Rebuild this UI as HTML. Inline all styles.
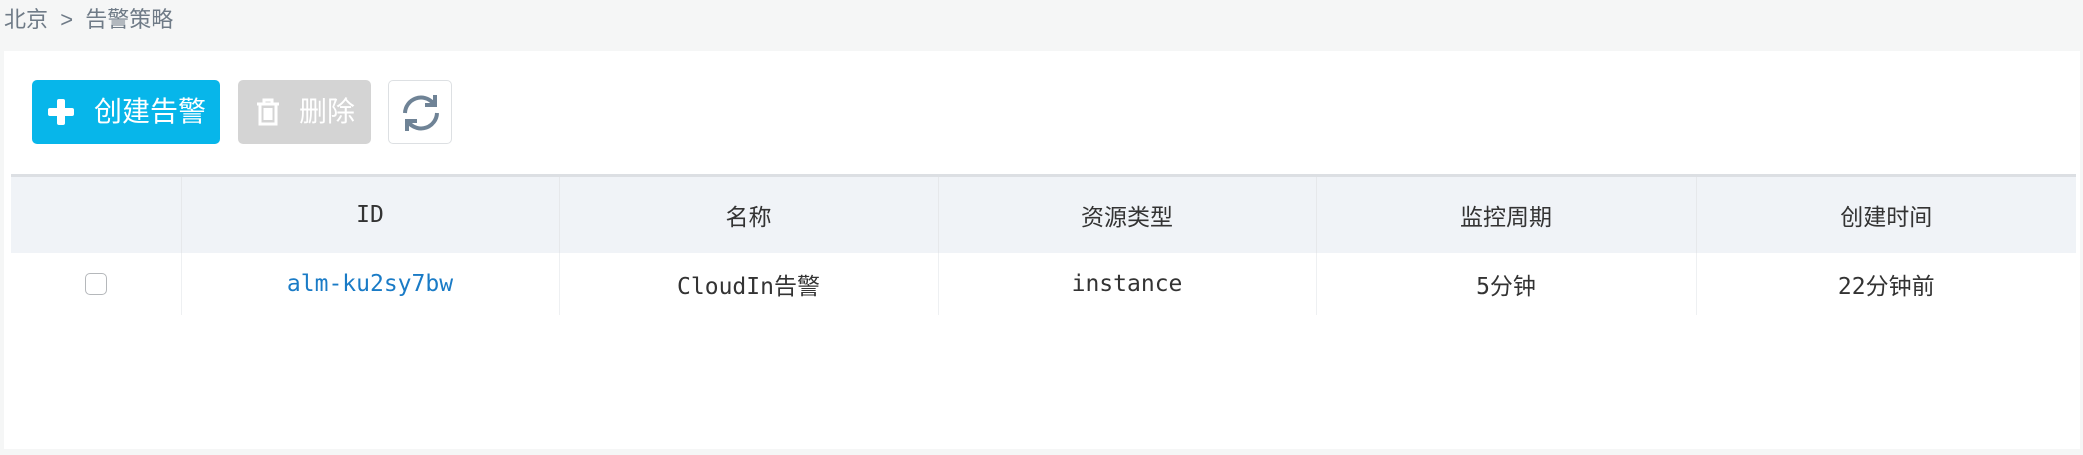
<!DOCTYPE html>
<html><head><meta charset="utf-8"><style>
*{margin:0;padding:0;box-sizing:border-box}
body{width:2083px;height:455px;background:#f5f6f6;position:relative;overflow:hidden;font-family:"Liberation Sans","Noto Sans CJK SC",sans-serif}
.bc{position:absolute;left:4px;top:5px;font-size:22px;color:#6f7b87;line-height:30px;white-space:pre}
.card{position:absolute;left:4px;top:51px;width:2076px;height:398px;background:#fff}
.btn{position:absolute;top:80px;height:64px;border-radius:5px;color:#fff;font-size:28px;line-height:64px}
.t{position:absolute;left:11px;top:174px;width:2065px;border-collapse:collapse;font-family:"DejaVu Sans Mono","Liberation Mono","Noto Sans CJK SC",monospace;font-size:23px;color:#333}
.t th{background:#f0f3f7;height:77px;font-weight:normal;border-top:3px solid #dcdfe3;border-left:1px solid #e6e8eb}
.t td{height:62px;text-align:center;border-left:1px solid #eef0f2}
.t th:first-child,.t td:first-child{border-left:none}
</style></head><body>
<div class="bc">北京  &gt;  告警策略</div>
<div class="card"></div>
<div class="btn" style="left:32px;width:188px;background:#07b6ea">
<svg style="position:absolute;left:16px;top:19px" width="26" height="26"><rect x="9" y="0" width="8" height="26" rx="2" fill="#fff"/><rect x="0" y="9" width="26" height="8" rx="2" fill="#fff"/></svg>
<span style="position:absolute;left:62px">创建告警</span></div>
<div class="btn" style="left:238px;width:133px;background:#d4d4d4">
<svg style="position:absolute;left:17px;top:18px" width="26" height="28" fill="none" stroke="#fff" stroke-width="3"><path d="M2 6H24M9 6V2H17V6M5 6V26H21V6M10 10V22M13 10V22M16 10V22"/></svg>
<span style="position:absolute;left:61px">删除</span></div>
<div class="btn" style="left:388px;width:64px;border:1px solid #dde0e3;background:#fff">
<svg style="position:absolute;left:11px;top:11px" width="42" height="42" viewBox="0 0 42 42" fill="none" stroke="#6f8396" stroke-width="4"><path d="M5 21A16 16 0 0 1 33 11"/><path d="M37 21A16 16 0 0 1 9 31"/><path d="M35 3V13H25"/><path d="M7 39V29H17"/></svg></div>
<table class="t">
<tr><th style="width:170px"></th><th style="width:378px">ID</th><th style="width:379px">名称</th><th style="width:378px">资源类型</th><th style="width:380px">监控周期</th><th>创建时间</th></tr>
<tr><td><span style="display:inline-block;width:22px;height:22px;border:1.5px solid #b5b8bb;border-radius:5px;vertical-align:middle"></span></td><td style="color:#1a7bc6">alm-ku2sy7bw</td><td>CloudIn告警</td><td>instance</td><td>5分钟</td><td>22分钟前</td></tr>
</table>
</body></html>
